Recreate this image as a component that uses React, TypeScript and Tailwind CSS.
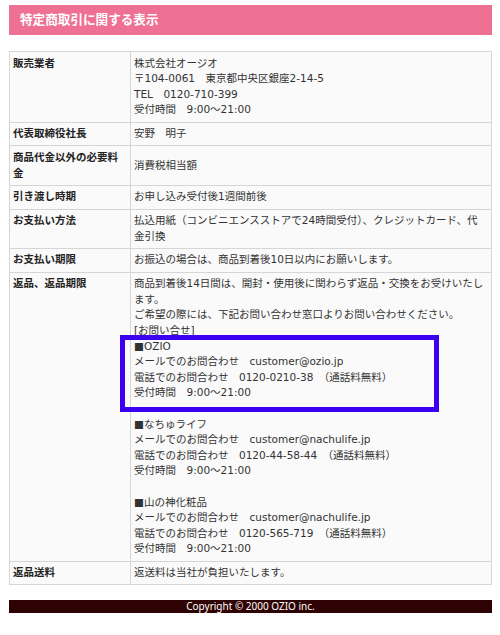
import React from 'react';

type Row = { label: React.ReactNode; value: React.ReactNode };

const contacts = [
  { name: 'OZIO', mail: 'customer@ozio.jp', tel: '0120-0210-38', marked: true },
  { name: 'なちゅライフ', mail: 'customer@nachulife.jp', tel: '0120-44-58-44', marked: false },
  { name: '山の神化粧品', mail: 'customer@nachulife.jp', tel: '0120-565-719', marked: false },
];

function ContactBlock({ name, mail, tel, marked }: { name: string; mail: string; tel: string; marked: boolean }) {
  return (
    <div className="relative">
      {marked && (
        <div className="pointer-events-none absolute left-[-14px] top-[-4px] h-[77px] w-[319px] border-[5px] border-[#3c00f0]" />
      )}
      <div>■{name}</div>
      <div>メールでのお問合わせ　{mail}</div>
      <div>電話でのお問合わせ　{tel}　（通話料無料）</div>
      <div>受付時間　9:00～21:00</div>
    </div>
  );
}

const rows: Row[] = [
  {
    label: '販売業者',
    value: (
      <>
        株式会社オージオ<br />
        〒104-0061　東京都中央区銀座2-14-5<br />
        TEL　0120-710-399<br />
        受付時間　9:00～21:00
      </>
    ),
  },
  { label: '代表取締役社長', value: '安野　明子' },
  { label: '商品代金以外の必要料金', value: '消費税相当額' },
  { label: '引き渡し時期', value: 'お申し込み受付後1週間前後' },
  { label: 'お支払い方法', value: '払込用紙（コンビニエンスストアで24時間受付）、クレジットカード、代金引換' },
  { label: 'お支払い期限', value: 'お振込の場合は、商品到着後10日以内にお願いします。' },
  {
    label: '返品、返品期限',
    value: (
      <>
        商品到着後14日間は、開封・使用後に関わらず返品・交換をお受けいたします。<br />
        ご希望の際には、下記お問い合わせ窓口よりお問い合わせください。<br />
        [お問い合せ]
        {contacts.map((c, i) => (
          <React.Fragment key={c.name}>
            {i > 0 && <div className="h-[15.6px]" />}
            <ContactBlock {...c} />
          </React.Fragment>
        ))}
      </>
    ),
  },
  { label: '返品送料', value: '返送料は当社が負担いたします。' },
];

export default function App() {
  return (
    <div
      className="min-h-[635px] bg-white pt-[5px] pl-[9px] text-[10.5px] leading-[15.6px] text-[#333]"
      style={{ fontFamily: '"DejaVu Sans", "Noto Sans CJK JP", sans-serif' }}
    >
      <div className="w-[483px]">
        <h1 className="flex h-[30px] items-center bg-[#ee7092] pl-[11px] text-[12.6px] font-bold text-white">
          特定商取引に関する表示
        </h1>

        <table className="mt-[16px] w-full border-collapse">
          <tbody>
            {rows.map((row, i) => (
              <tr key={i}>
                <th className="w-[121px] border border-[#d6d6d6] bg-[#fafafa] px-[3px] py-[3.6px] text-left align-top font-bold text-[#222]">
                  {row.label}
                </th>
                <td className="border border-[#d6d6d6] bg-[#fafafa] pl-[3px] pr-[6px] py-[3.6px] align-middle">
                  {row.value}
                </td>
              </tr>
            ))}
          </tbody>
        </table>

        <div
          className="mt-[15px] h-[13px] bg-[#2e0202] text-center text-[10px] leading-[13px] text-white"
          style={{ fontFamily: '"Noto Sans", sans-serif' }}
        >
          Copyright © 2000 OZIO inc.
        </div>
      </div>
    </div>
  );
}
